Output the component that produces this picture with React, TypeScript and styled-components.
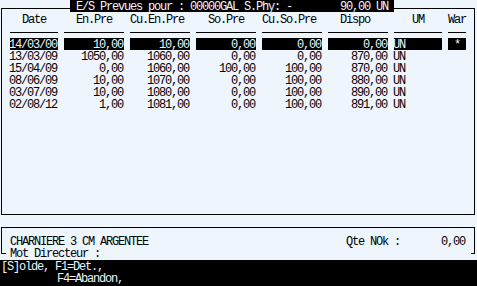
import React from 'react';
import styled, { createGlobalStyle } from 'styled-components';

// terminal cell: 6px wide, 12px tall
const CH = 6;
const PAPER = '#eef5fd';
const INK = '#000';

type Align = 'left' | 'right' | 'center';

const columns: { title: string; width: number; indent: number; align: Align }[] = [
  { title: 'Date', width: 8, indent: 2, align: 'left' },
  { title: 'En.Pre', width: 10, indent: 2, align: 'right' },
  { title: 'Cu.En.Pre', width: 10, indent: 0, align: 'right' },
  { title: 'So.Pre', width: 10, indent: 2, align: 'right' },
  { title: 'Cu.So.Pre', width: 10, indent: 0, align: 'right' },
  { title: 'Dispo', width: 10, indent: 2, align: 'right' },
  { title: 'UM', width: 8, indent: 3, align: 'left' },
  { title: 'War', width: 3, indent: 0, align: 'center' },
];

const rows = [
  ['14/03/00', '10,00', '10,00', '0,00', '0,00', '0,00', 'UN', '*'],
  ['13/03/09', '1050,00', '1060,00', '0,00', '0,00', '870,00', 'UN', ''],
  ['15/04/09', '0,00', '1060,00', '100,00', '100,00', '870,00', 'UN', ''],
  ['08/06/09', '10,00', '1070,00', '0,00', '100,00', '880,00', 'UN', ''],
  ['03/07/09', '10,00', '1080,00', '0,00', '100,00', '890,00', 'UN', ''],
  ['02/08/12', '1,00', '1081,00', '0,00', '100,00', '891,00', 'UN', ''],
];

const App = () => {
  return (
    <>
      <GlobalStyle />
      <Screen>
        <Frame>
          <Title>{'E/S Prevues pour : 00000GAL S.Phy: -        90,00 UN'}</Title>
          <HeaderRow>
            {columns.map((c) => (
              <Head key={c.title} $w={c.width} $indent={c.indent}>
                {c.title}
              </Head>
            ))}
          </HeaderRow>
          <RuleRow>
            {columns.map((c) => (
              <Rule key={c.title} $w={c.width} />
            ))}
          </RuleRow>
          {rows.map((r, i) => (
            <DataRow key={i}>
              {r.map((v, j) => (
                <Cell key={j} $w={columns[j].width} $align={columns[j].align} $active={i === 0}>
                  {v}
                </Cell>
              ))}
            </DataRow>
          ))}
        </Frame>

        <InfoFrame>
          <InfoRow>
            <Article>CHARNIERE 3 CM ARGENTEE</Article>
            <QtyLabel>Qte NOk :</QtyLabel>
            <QtyValue>0,00</QtyValue>
          </InfoRow>
          <Prompt>Mot Directeur :</Prompt>
        </InfoFrame>

        <KeyBar>
          <KeyLine>[S]olde, F1=Det.,</KeyLine>
          <KeyLine $indent={56}>F4=Abandon,</KeyLine>
        </KeyBar>
      </Screen>
    </>
  );
};

const GlobalStyle = createGlobalStyle`
  html, body {
    margin: 0;
    padding: 0;
    background: ${PAPER};
  }
  body {
    font-family: "Liberation Mono", "DejaVu Sans Mono", monospace;
    font-size: 12px;
    letter-spacing: -1.2px;
    color: ${INK};
  }
`;

const Screen = styled.div`
  width: 477px;
  height: 286px;
  display: flex;
  flex-direction: column;
  overflow: hidden;
  background: ${PAPER};
`;

const Frame = styled.div`
  position: relative;
  box-sizing: border-box;
  height: 207px;
  margin: 8px 2px 0 1px;
  padding-top: 3px;
  border: 1px solid ${INK};
`;

const Title = styled.div`
  position: absolute;
  top: -9px;
  left: 68px;
  box-sizing: border-box;
  height: 12px;
  padding: 1px ${CH}px 0;
  line-height: 12px;
  background: ${INK};
  color: ${PAPER};
  white-space: pre;
`;

const HeaderRow = styled.div`
  display: flex;
  gap: ${CH}px;
  box-sizing: border-box;
  height: 12px;
  padding: 2px 0 0 8px;
  line-height: 12px;
`;

const Head = styled.div<{ $w: number; $indent: number }>`
  box-sizing: border-box;
  width: ${({ $w }) => $w * CH}px;
  padding-left: ${({ $indent }) => $indent * CH}px;
  white-space: pre;
`;

const RuleRow = styled.div`
  display: flex;
  align-items: flex-start;
  gap: ${CH}px;
  height: 14px;
  padding-left: 8px;
`;

const Rule = styled.div<{ $w: number }>`
  width: ${({ $w }) => $w * CH}px;
  height: 8px;
  border-bottom: 1px solid ${INK};
`;

const DataRow = styled.div`
  display: flex;
  gap: ${CH}px;
  height: 12px;
  padding-left: 8px;
`;

const Cell = styled.div<{ $w: number; $align: Align; $active: boolean }>`
  box-sizing: border-box;
  width: ${({ $w }) => $w * CH}px;
  height: 12px;
  padding-top: 1px;
  padding-right: ${({ $align }) => ($align === 'right' ? 1 : 0)}px;
  line-height: 12px;
  text-align: ${({ $align }) => $align};
  text-indent: ${({ $align }) => ($align === 'left' ? -1 : 0)}px;
  white-space: pre;
  background: ${({ $active }) => ($active ? INK : 'transparent')};
  color: ${({ $active }) => ($active ? PAPER : INK)};
`;

const InfoFrame = styled.div`
  margin: 12px 2px 0 1px;
  padding-top: 7px;
  border: 1px solid ${INK};
`;

const InfoRow = styled.div`
  display: flex;
  box-sizing: border-box;
  height: 12px;
  padding: 1px 8px 0;
  line-height: 12px;
  white-space: pre;
`;

const Article = styled.div`
  flex: 1;
`;

const QtyLabel = styled.div`
  width: ${9 * CH}px;
`;

const QtyValue = styled.div`
  box-sizing: border-box;
  width: ${11 * CH}px;
  padding-right: 1px;
  text-align: right;
`;

const Prompt = styled.div`
  box-sizing: border-box;
  height: 12px;
  margin: 0 3px -6px 4px;
  padding: 1px 0 0 4px;
  line-height: 12px;
  background: ${PAPER};
  white-space: pre;
`;

const KeyBar = styled.div`
  margin-top: 6px;
  height: 26px;
  padding: 0 1px;
  background: ${INK};
  color: ${PAPER};
`;

const KeyLine = styled.div<{ $indent?: number }>`
  box-sizing: border-box;
  height: 12px;
  padding-top: 1px;
  padding-left: ${({ $indent }) => $indent ?? 0}px;
  line-height: 12px;
  white-space: pre;
`;

export default App;
